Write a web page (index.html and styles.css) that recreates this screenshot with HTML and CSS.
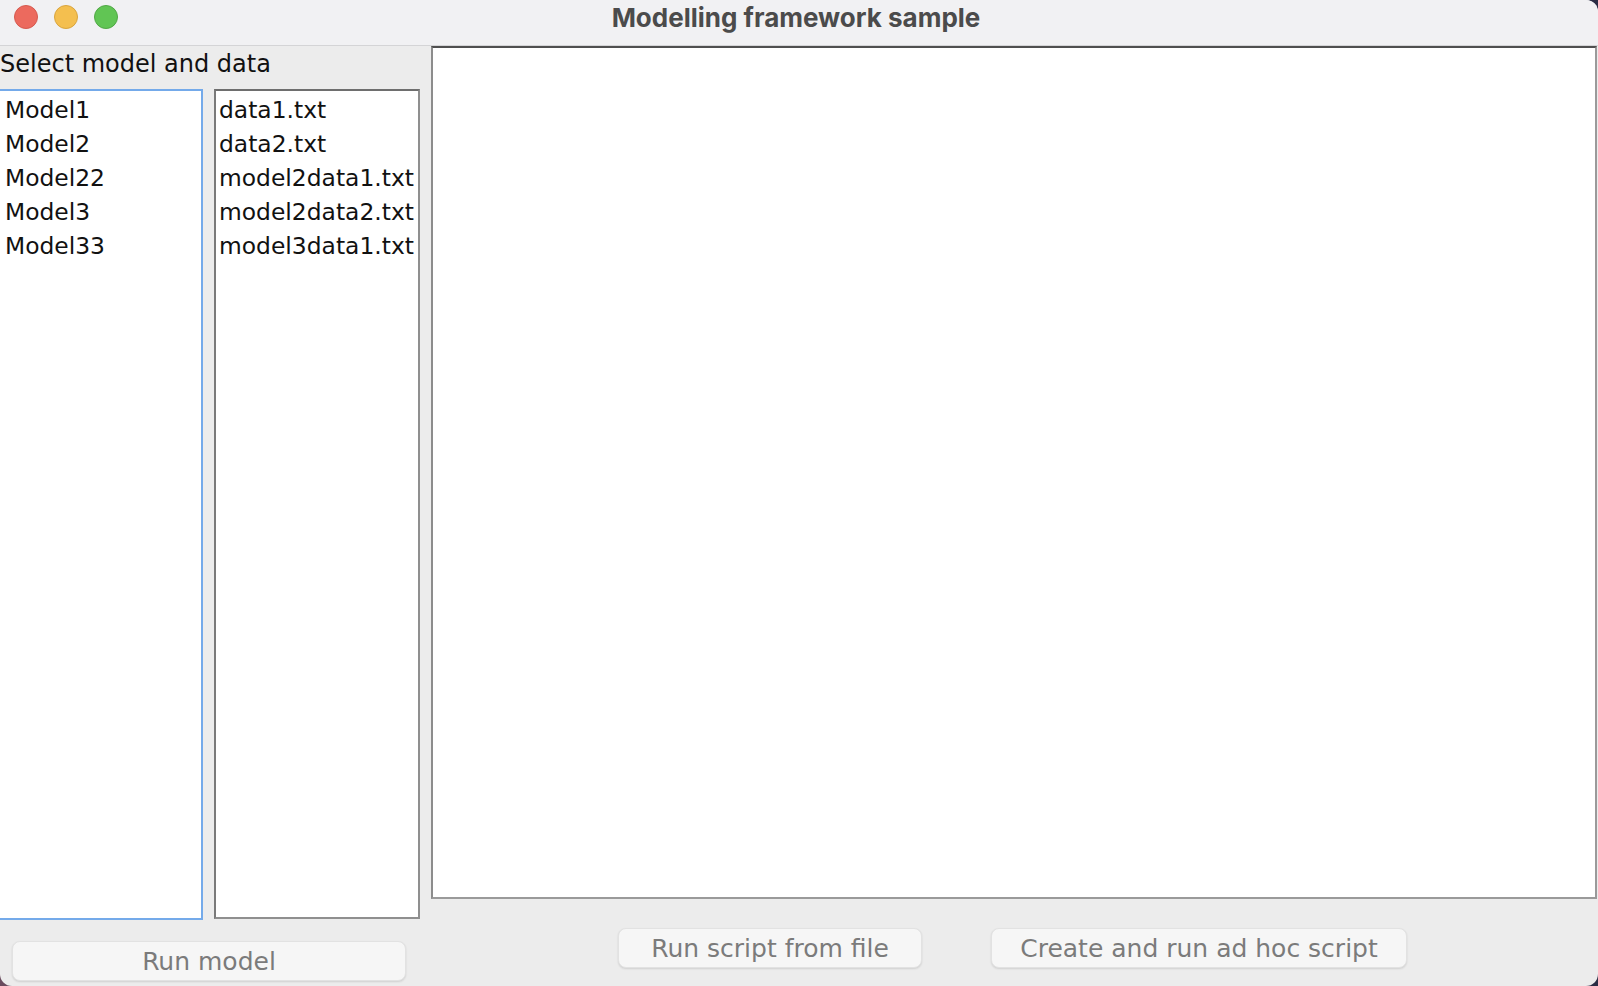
FILE: index.html
```html
<!DOCTYPE html>
<html>
<head>
<meta charset="utf-8">
<title>Modelling framework sample</title>
<link rel="stylesheet" href="styles.css">
</head>
<body>
<div class="window">
  <div class="titlebar">
    <div class="lights">
      <span class="light red"></span>
      <span class="light yellow"></span>
      <span class="light green"></span>
    </div>
    <div class="title">Modelling framework sample</div>
    <div class="spacer"></div>
  </div>
  <div class="content">
    <div class="left">
      <div class="label">Select model and data</div>
      <div class="lists">
        <ul class="list list-focus">
          <li>Model1</li>
          <li>Model2</li>
          <li>Model22</li>
          <li>Model3</li>
          <li>Model33</li>
        </ul>
        <ul class="list list-plain">
          <li>data1.txt</li>
          <li>data2.txt</li>
          <li>model2data1.txt</li>
          <li>model2data2.txt</li>
          <li>model3data1.txt</li>
        </ul>
      </div>
      <div class="btnrow-left">
        <button class="btn btn-run" disabled>Run model</button>
      </div>
    </div>
    <div class="right">
      <div class="textarea"></div>
      <div class="btnrow-right">
        <button class="btn btn-file" disabled>Run script from file</button>
        <button class="btn btn-adhoc" disabled>Create and run ad hoc script</button>
      </div>
    </div>
  </div>
</div>
</body>
</html>
```
FILE: styles.css
```css
html, body {
  margin: 0;
  padding: 0;
}
body {
  width: 1598px;
  height: 986px;
  overflow: hidden;
  background: linear-gradient(to right, #6a4b5e 0%, #2c2b40 40%, #2a2c44 100%);
  font-family: "DejaVu Sans", "Liberation Sans", sans-serif;
}
.window {
  width: 1598px;
  height: 986px;
  display: flex;
  flex-direction: column;
  background: #ececec;
  border-radius: 0 12px 12px 12px;
  overflow: hidden;
}
.titlebar {
  height: 46px;
  box-sizing: border-box;
  flex: none;
  background: #f1f1f3;
  border-bottom: 1px solid #d4d4d6;
  display: grid;
  grid-template-columns: 1fr auto 1fr;
  align-items: center;
}
.lights {
  display: flex;
  gap: 16px;
  padding-left: 14px;
  margin-top: -11px;
}
.light {
  width: 24px;
  height: 24px;
  border-radius: 50%;
  box-sizing: border-box;
}
.red { background: #ec6a5e; border: 1px solid #d65a4f; }
.yellow { background: #f4bf4f; border: 1px solid #d9a53e; }
.green { background: #61c554; border: 1px solid #51a846; }
.title {
  font-family: "Inter", "Liberation Sans", sans-serif;
  font-weight: 700;
  font-size: 26px;
  color: #4b4b4b;
  margin-top: -11px;
  margin-left: -6px;
}
.content {
  flex: 1;
  display: flex;
  min-height: 0;
}
.left {
  width: 420px;
  flex: none;
  display: flex;
  flex-direction: column;
}
.label {
  height: 43px;
  box-sizing: border-box;
  padding-top: 3px;
  font-size: 24px;
  line-height: 30px;
  color: #111;
  white-space: nowrap;
}
.lists {
  height: 831px;
  display: flex;
  gap: 11px;
}
.list {
  margin: 0;
  padding: 2px 0 0 0;
  list-style: none;
  background: #fff;
  box-sizing: border-box;
  font-size: 23.4px;
  color: #111;
}
.list li {
  height: 34px;
  line-height: 34px;
  padding-left: 3px;
  white-space: nowrap;
}
.list-focus {
  width: 203px;
  border: 2px solid #74aaea;
  border-left: none;
  padding-left: 2px;
}
.list-plain {
  width: 206px;
  height: 830px;
  border: 2px solid #8f8f8f;
  border-top-color: #6e6e6e;
  border-left-color: #7a7a7a;
}
.btnrow-left {
  padding: 21px 14px 0 12px;
}
.btn {
  height: 40px;
  box-sizing: border-box;
  background: #f6f6f6;
  border: 1px solid #e2e2e2;
  border-radius: 8px;
  box-shadow: 0 1px 2px rgba(0, 0, 0, 0.12);
  font-family: "DejaVu Sans", "Liberation Sans", sans-serif;
  font-size: 25px;
  color: #7b7b7b;
  padding: 0;
  display: flex;
  align-items: center;
  justify-content: center;
}
.btn-run {
  width: 394px;
}
.right {
  flex: 1;
  margin-left: 11px;
  display: flex;
  flex-direction: column;
}
.textarea {
  height: 853px;
  box-sizing: border-box;
  background: #fff;
  border: 2px solid #9a9a9a;
  border-top-color: #4f4f4f;
  border-left-color: #8c8c8c;
  margin-right: 1px;
}
.btnrow-right {
  display: flex;
  justify-content: center;
  gap: 69px;
  padding-top: 29px;
  padding-right: 4px;
}
.btn-file {
  width: 304px;
}
.btn-adhoc {
  width: 416px;
}
```
